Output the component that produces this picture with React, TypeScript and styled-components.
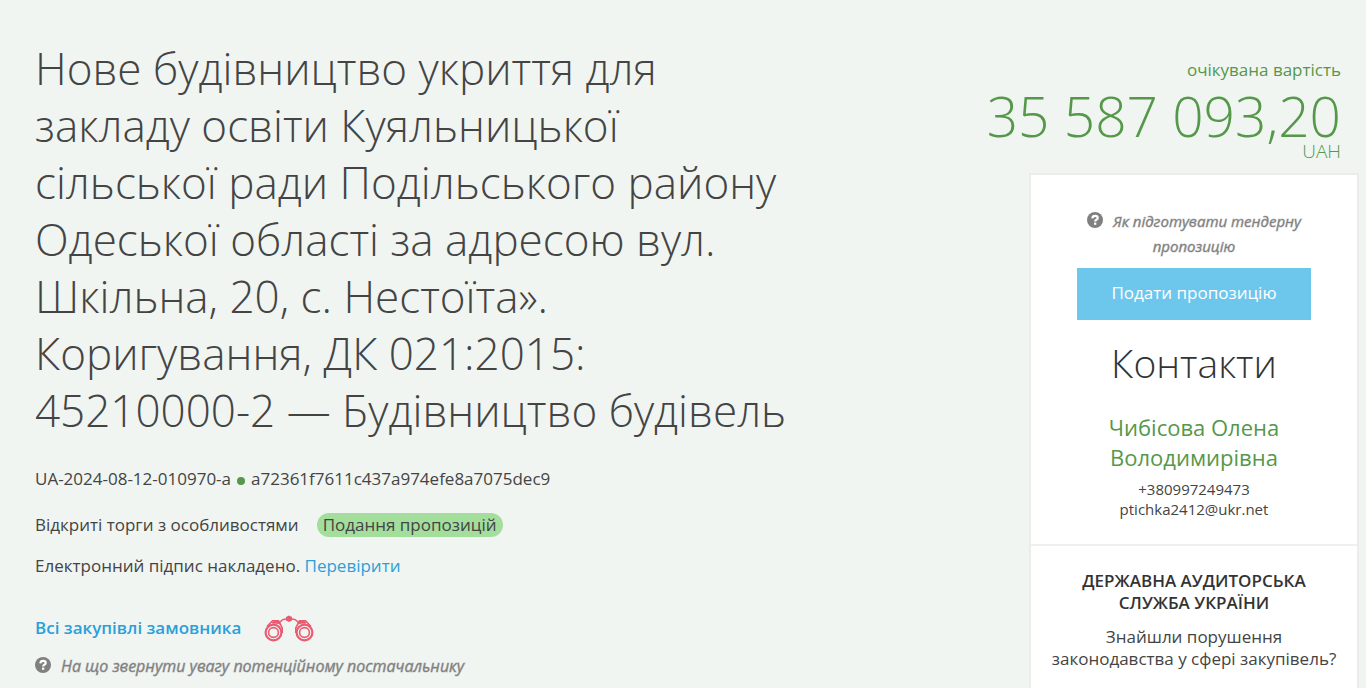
import React from 'react';
import styled, { createGlobalStyle } from 'styled-components';

const Global = createGlobalStyle`
  *, *::before, *::after { box-sizing: border-box; }
  body {
    margin: 0;
    background: #f0f5f2;
    color: #444;
    font-family: 'Open Sans', sans-serif;
    font-size: 17px;
    line-height: 24px;
  }
  h1, h2, h3, p { margin: 0; }
  a { color: #2b9fd9; text-decoration: none; }
`;

const Page = styled.div`
  display: flex;
  justify-content: space-between;
  align-items: flex-start;
  padding: 40px 7px 0 35px;
`;

const Main = styled.main`
  flex: 0 1 58%;
  min-width: 0;
  display: flex;
  flex-direction: column;
  align-items: flex-start;
`;

const Title = styled.h1`
  font-size: 44px;
  line-height: 57px;
  font-weight: 300;
`;

const Meta = styled.p`
  margin-top: ${(p: { $gap: number }) => p.$gap}px;
`;

const Dot = styled.span`
  display: inline-block;
  width: 8px;
  height: 8px;
  margin: 0 6px;
  border-radius: 50%;
  background: #55984a;
`;

const Status = styled.span`
  display: inline-block;
  margin-left: 18px;
  padding: 0 6px;
  border-radius: 12px;
  background: #a3de9c;
`;

const BuyerRow = styled.div`
  display: flex;
  align-items: center;
  gap: 23px;
  margin: 36px 0 12px;
`;

const BuyerLink = styled.a`
  font-weight: 600;
`;

const Hint = styled.a`
  color: #808080;
  font-size: ${(p: { $size: number }) => p.$size}px;
  font-style: italic;
  line-height: 25px;
  -webkit-text-stroke: 1px rgba(128, 128, 128, 0.4);
`;

const HintIcon = styled.svg`
  width: 16px;
  height: 16px;
  margin-right: 10px;
  vertical-align: -1px;
`;

const Side = styled.aside`
  flex: 0 0 370px;
  display: flex;
  flex-direction: column;
  align-items: flex-end;
`;

const Value = styled.div`
  display: flex;
  flex-direction: column;
  align-items: flex-end;
  padding: 18px 18px 0 0;
  color: #55984a;
`;

const Amount = styled.strong`
  margin-top: 7px;
  font-size: 55px;
  line-height: 54px;
  font-weight: 300;
  white-space: nowrap;
`;

const Currency = styled.span`
  font-size: 19px;
  line-height: 16px;
  font-weight: 300;
`;

const Card = styled.div`
  width: 330px;
  margin-top: 14px;
  border: 2px solid #ececec;
  background: #fff;
  text-align: center;
`;

const Section = styled.section`
  padding: 34px 46px 25px;
  & + & {
    padding: 24px 12px;
    border-top: 2px solid #f0f0f0;
  }
`;

const Submit = styled.button`
  display: block;
  width: 100%;
  height: 52px;
  margin-top: 9px;
  padding: 0 0 2px;
  border: 0;
  background: #6dc6ec;
  color: #fff;
  font: 400 17px/24px 'Open Sans', sans-serif;
  cursor: pointer;
`;

const Heading = styled.h2`
  margin-top: 15px;
  color: #333;
  font-size: 39px;
  line-height: 56px;
  font-weight: 300;
`;

const Person = styled.h3`
  margin-top: 21px;
  color: #55984a;
  font-size: 22px;
  line-height: 30px;
  font-weight: 400;
`;

const Contact = styled.p`
  margin-top: 7px;
  font-size: 15px;
  line-height: 20px;
  a { color: inherit; display: block; }
`;

const AuditTitle = styled.h3`
  padding: 0 30px;
  color: #333;
  font-size: 17px;
  line-height: 22px;
  font-weight: 600;
`;

const AuditText = styled.p`
  margin-top: 12px;
  line-height: 22px;
`;

const Question = () => (
  <HintIcon viewBox="0 0 16 16" aria-hidden="true">
    <circle cx="8" cy="8" r="8" fill="#808080" />
    <path d="M5.3 6.300C5.500 4.600 6.600 3.800 8.100 3.800c1.500 0 2.600.8 2.600 2.100 0 1.900-2.500 1.700-2.500 3.600" fill="none" stroke="#fff" strokeWidth="2.200" />
    <rect x="7" y="10.600" width="2.300" height="2.200" fill="#fff" />
  </HintIcon>
);

const Binoculars = () => (
  <svg width="50" height="28" viewBox="0 0 50 28" fill="none" stroke="#ea5a70" aria-hidden="true">
    <circle cx="9.500" cy="18.500" r="7.900" strokeWidth="2.200" />
    <circle cx="9.500" cy="18.500" r="4.900" strokeWidth="1.600" />
    <circle cx="40.500" cy="18.500" r="7.900" strokeWidth="2.200" />
    <circle cx="40.500" cy="18.500" r="4.900" strokeWidth="1.600" />
    <path d="M3 12.500 8.500 6.700h5.200l2 2.200 2.500 5v5M47 12.500l-5.500-5.800h-5.200l-2 2.200-2.500 5v5" strokeWidth="1.600" />
    <path d="m8 9 3-2.500h4l1 3.500-3-.8zM42 9 39 6.500h-4l-1 3.500 3-.8z" fill="#ea5a70" strokeWidth="1" />
    <path d="M16 8.500c1.500-3 4-3.500 6.500-3.500M34 8.500c-1.500-3-4-3.500-6.500-3.500" strokeWidth="1.400" />
    <path d="M22 3 25 1.500l3 1.500v3.500L25 8l-3-1.500z" fill="#ea5a70" stroke="none" />
  </svg>
);

export default function App() {
  return (
    <>
      <Global />
      <Page>
        <Main>
          <Title>
            Нове будівництво укриття для закладу освіти Куяльницької сільської ради Подільського
            району Одеської області за адресою вул. Шкільна, 20, с. Нестоїта». Коригування, ДК
            021:2015: 45210000-2 — Будівництво будівель
          </Title>
          <Meta $gap={28}>
            UA-2024-08-12-010970-a<Dot />a72361f7611c437a974efe8a7075dec9
          </Meta>
          <Meta $gap={22}>
            Відкриті торги з особливостями<Status>Подання пропозицій</Status>
          </Meta>
          <Meta $gap={17}>
            Електронний підпис накладено. <a href="#sign">Перевірити</a>
          </Meta>
          <BuyerRow>
            <BuyerLink href="#buyer">Всі закупівлі замовника</BuyerLink>
            <Binoculars />
          </BuyerRow>
          <Hint $size={16} href="#supplier-tips">
            <Question />На що звернути увагу потенційному постачальнику
          </Hint>
        </Main>
        <Side>
          <Value>
            <span>очікувана вартість</span>
            <Amount>35 587 093,20</Amount>
            <Currency>UAH</Currency>
          </Value>
          <Card>
            <Section>
              <Hint $size={15} href="#how-to">
                <Question />Як підготувати тендерну пропозицію
              </Hint>
              <Submit type="button">Подати пропозицію</Submit>
              <Heading>Контакти</Heading>
              <Person>Чибісова Олена Володимирівна</Person>
              <Contact>
                <a href="tel:+380997249473">+380997249473</a>
                <a href="mailto:ptichka2412@ukr.net">ptichka2412@ukr.net</a>
              </Contact>
            </Section>
            <Section>
              <AuditTitle>ДЕРЖАВНА АУДИТОРСЬКА СЛУЖБА УКРАЇНИ</AuditTitle>
              <AuditText>Знайшли порушення законодавства у сфері закупівель?</AuditText>
            </Section>
          </Card>
        </Side>
      </Page>
    </>
  );
}
